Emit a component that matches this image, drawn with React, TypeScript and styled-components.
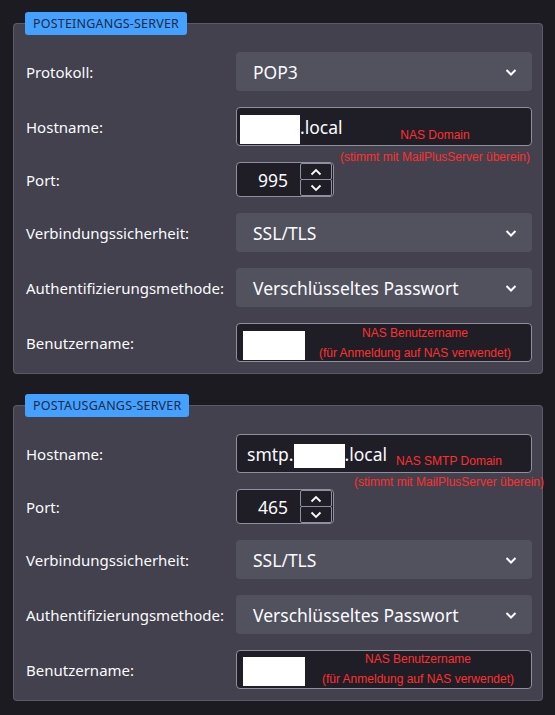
import React from 'react';
import styled, { createGlobalStyle } from 'styled-components';

const GlobalStyle = createGlobalStyle`
  html, body {
    margin: 0;
    padding: 0;
    background: #1c1b22;
  }
  body {
    font-family: "Noto Sans", "Open Sans", sans-serif;
    color: #fbfbfe;
  }
`;

const Page = styled.div`
  display: flex;
  flex-direction: column;
  gap: 20px;
  padding: 12px 12px 0 13px;
  width: 530px;
`;

const Panel = styled.fieldset`
  margin: 0;
  padding: 0 10px 11px 11px;
  background: #42414d;
  border: 1px solid #5b5a66;
  border-radius: 4px;
  min-width: 0;
`;

const Legend = styled.legend`
  padding: 0 8px;
  height: 23px;
  line-height: 23px;
  background: #45a1ff;
  color: #1c2a44;
  border-radius: 3px;
  font-size: 12.5px;
  letter-spacing: 0.2px;
  text-transform: uppercase;
`;

const Rows = styled.div`
  display: grid;
  grid-template-columns: 211px 1fr;
  row-gap: 16px;
  padding-top: 17px;
  align-items: center;
`;

const Label = styled.div`
  padding-left: 1px;
  font-size: 15px;
  color: #fbfbfe;
  white-space: nowrap;
`;

const Select = styled.div`
  display: flex;
  align-items: center;
  justify-content: space-between;
  height: 39px;
  padding: 0 14px 0 17px;
  background: #52515e;
  border-radius: 4px;
  font-size: 17.5px;
  color: #fbfbfe;
`;

const Chevron = styled.svg`
  width: 14px;
  height: 14px;
  stroke: #fbfbfe;
  stroke-width: 2;
  fill: none;
`;

const Field = styled.div<{ $small?: boolean }>`
  position: relative;
  display: flex;
  align-items: center;
  box-sizing: border-box;
  height: 39px;
  padding-left: ${p => (p.$small ? 6 : 10)}px;
  background: #1f1e26;
  border: 1px solid #8f8f9d;
  border-radius: 4px;
  font-size: 17.5px;
  color: #fbfbfe;
  white-space: nowrap;
`;

const Redacted = styled.span<{ $w: number; $h: number; $dx?: number; $dy?: number }>`
  display: inline-block;
  width: ${p => p.$w}px;
  height: ${p => p.$h}px;
  margin-left: ${p => p.$dx ?? 0}px;
  margin-top: ${p => p.$dy ?? 0}px;
  background: #ffffff;
`;

const Note = styled.div<{ $x: number; $y: number; $lh: number }>`
  position: absolute;
  left: ${p => p.$x}px;
  top: ${p => p.$y}px;
  transform: translateX(-50%);
  font-family: "Liberation Sans", Arial, sans-serif;
  font-size: 12px;
  line-height: ${p => p.$lh}px;
  color: #ff2f2f;
  text-align: center;
  white-space: nowrap;
  pointer-events: none;
`;

const NumberBox = styled.div`
  display: flex;
  align-items: center;
  box-sizing: border-box;
  width: 98px;
  height: 35px;
  padding-right: 1px;
  background: #1f1e26;
  border: 1px solid #8f8f9d;
  border-radius: 4px;
`;

const NumberValue = styled.span`
  flex: 1;
  padding-left: 21px;
  font-size: 17.5px;
  color: #fbfbfe;
`;

const Spinner = styled.div`
  display: flex;
  flex-direction: column;
  width: 32px;
  height: 33px;
`;

const SpinButton = styled.div`
  flex: 1;
  display: flex;
  align-items: center;
  justify-content: center;
  border: 1px solid #8f8f9d;
  border-radius: 2px;
  & + & {
    margin-top: -1px;
  }
`;

const SpinIcon = styled.svg`
  width: 12px;
  height: 8px;
  stroke: #fbfbfe;
  stroke-width: 1.8;
  fill: none;
`;

const ChevronDown = () => (
  <Chevron viewBox="0 0 14 14">
    <path d="M2.5 5 L7 9.5 L11.5 5" />
  </Chevron>
);

const DropDown = ({ value }: { value: string }) => (
  <Select>
    <span>{value}</span>
    <ChevronDown />
  </Select>
);

const PortInput = ({ value }: { value: string }) => (
  <NumberBox>
    <NumberValue>{value}</NumberValue>
    <Spinner>
      <SpinButton>
        <SpinIcon viewBox="0 0 12 8">
          <path d="M1.5 6.5 L6 2 L10.5 6.5" />
        </SpinIcon>
      </SpinButton>
      <SpinButton>
        <SpinIcon viewBox="0 0 12 8">
          <path d="M1.5 1.5 L6 6 L10.5 1.5" />
        </SpinIcon>
      </SpinButton>
    </Spinner>
  </NumberBox>
);

const UserField = ({ dy, note }: { dy: number; note: { x: number; y: number } }) => (
  <Field $small>
    <Redacted $w={62} $h={29} $dy={dy} />
    <Note $x={note.x} $y={note.y} $lh={20}>
      NAS Benutzername
      <br />
      (für Anmeldung auf NAS verwendet)
    </Note>
  </Field>
);

export default function App() {
  return (
    <>
      <GlobalStyle />
      <Page>
        <Panel>
          <Legend>Posteingangs-Server</Legend>
          <Rows>
            <Label>Protokoll:</Label>
            <DropDown value="POP3" />

            <Label>Hostname:</Label>
            <Field>
              <Redacted $w={60} $h={29} $dx={-7} $dy={6} />
              <span>.local</span>
              <Note $x={198} $y={16} $lh={22}>
                NAS Domain
                <br />
                (stimmt mit MailPlusServer überein)
              </Note>
            </Field>

            <Label>Port:</Label>
            <PortInput value="995" />

            <Label>Verbindungssicherheit:</Label>
            <DropDown value="SSL/TLS" />

            <Label>Authentifizierungsmethode:</Label>
            <DropDown value="Verschlüsseltes Passwort" />

            <Label>Benutzername:</Label>
            <UserField dy={6} note={{ x: 178, y: -1 }} />
          </Rows>
        </Panel>

        <Panel>
          <Legend>Postausgangs-Server</Legend>
          <Rows>
            <Label>Hostname:</Label>
            <Field>
              <span>smtp.</span>
              <Redacted $w={51} $h={24} $dy={4} />
              <span>.local</span>
              <Note $x={212} $y={16} $lh={21}>
                NAS SMTP Domain
                <br />
                (stimmt mit MailPlusServer überein)
              </Note>
            </Field>

            <Label>Port:</Label>
            <PortInput value="465" />

            <Label>Verbindungssicherheit:</Label>
            <DropDown value="SSL/TLS" />

            <Label>Authentifizierungsmethode:</Label>
            <DropDown value="Verschlüsseltes Passwort" />

            <Label>Benutzername:</Label>
            <UserField dy={4} note={{ x: 181, y: -2 }} />
          </Rows>
        </Panel>
      </Page>
    </>
  );
}
